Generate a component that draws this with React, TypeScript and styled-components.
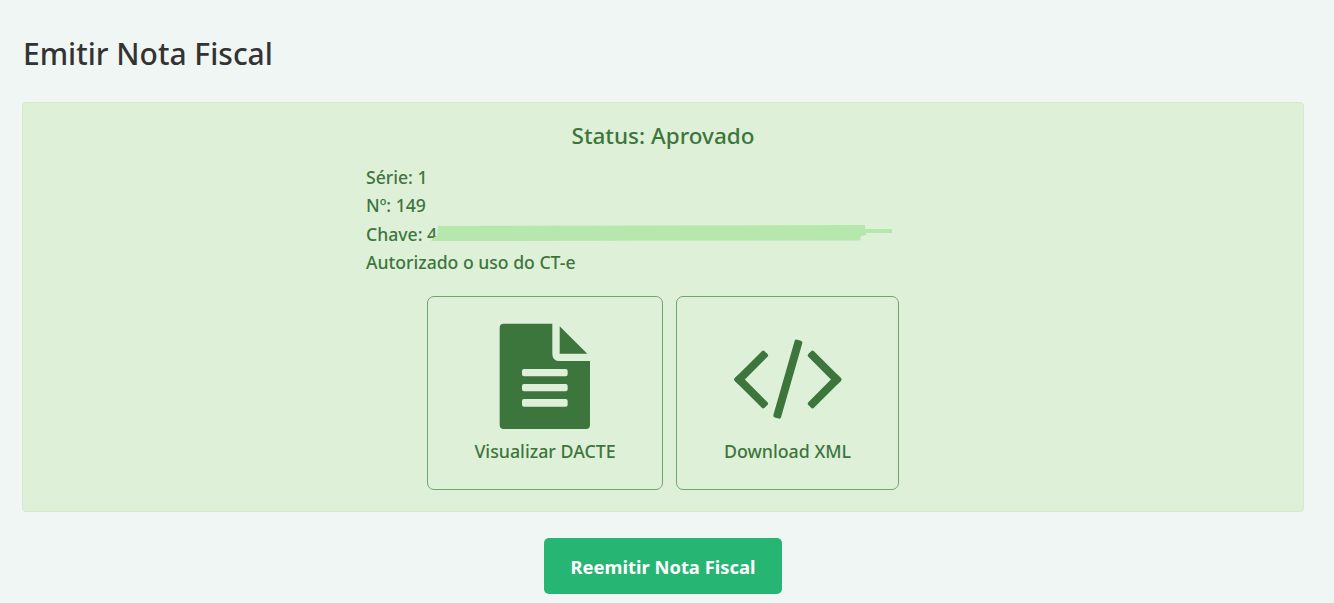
import React from "react";
import styled, { createGlobalStyle } from "styled-components";

const Global = createGlobalStyle`
  html, body { margin: 0; padding: 0; background: #f0f6f4; }
  body { font-family: "Noto Sans", "Open Sans", sans-serif; overflow: hidden; }
`;

const Page = styled.main`
  box-sizing: border-box;
  height: 603px;
  padding: 33px 30px 0 22px;
  overflow: hidden;
`;

const Title = styled.h1`
  margin: 0 0 27px 1px;
  font-size: 30px;
  line-height: 42px;
  font-weight: 500;
  color: #333;
`;

const Panel = styled.section`
  box-sizing: border-box;
  height: 410px;
  padding: 18px 0 0;
  background: #dff0d8;
  border: 1px solid #d6e9c6;
  border-radius: 4px;
  color: #3c763d;
`;

const Status = styled.h2`
  margin: 0 0 12px;
  font-size: 22.5px;
  line-height: 30px;
  font-weight: 500;
  text-align: center;
`;

const Info = styled.div`
  width: 594px;
  margin: 0 auto 19.8px;
`;

const InfoLine = styled.p`
  position: relative;
  margin: 0;
  font-size: 17.6px;
  line-height: 28.3px;
  font-weight: 500;
`;

const Redaction = styled.svg`
  position: absolute;
  left: 57px;
  top: 2px;
  width: 470px;
  height: 20px;
`;

const Actions = styled.div`
  display: flex;
  justify-content: center;
  gap: 13px;
`;

const ActionCard = styled.button<{ $width: number }>`
  box-sizing: border-box;
  width: ${(p) => p.$width}px;
  height: 194px;
  display: flex;
  flex-direction: column;
  align-items: center;
  padding: 0;
  background: transparent;
  border: 1px solid #72a472;
  border-radius: 7px;
  color: #3c763d;
  font: 500 17.8px/24px "Noto Sans", "Open Sans", sans-serif;
`;

const IconSlot = styled.span`
  height: 107px;
  margin: 26px 0 9px;
  display: flex;
  align-items: center;
  justify-content: center;
`;

const Footer = styled.div`
  display: flex;
  justify-content: center;
  margin-top: 26px;
`;

const Primary = styled.button`
  box-sizing: border-box;
  width: 238px;
  height: 56px;
  padding: 1px 0 0;
  background: #26b573;
  border: 0;
  border-radius: 5px;
  color: #fff;
  font: 700 18.4px/24px "Noto Sans", "Open Sans", sans-serif;
`;

const FileIcon = () => (
  <svg width="91.67" height="106.67" viewBox="238 98 275 320" fill="#3c763d" aria-hidden="true">
    <path
      fillRule="evenodd"
      d="M252 100H398V190Q398 212 420 212H511V404Q511 416 499 416H252Q240 416 240 404V112Q240 100 252 100ZM313 236Q307 236 307 242V252Q307 258 313 258H438Q444 258 444 252V242Q444 236 438 236ZM313 281Q307 281 307 287V297Q307 303 313 303H438Q444 303 444 297V287Q444 281 438 281ZM313 326Q307 326 307 332V343Q307 349 313 349H438Q444 349 444 343V332Q444 326 438 326Z"
    />
    <path d="M420 108L503 190H420Z" />
  </svg>
);

const CodeSvg = styled.svg`
  margin-top: 7px;
`;

const CodeIcon = () => (
  <CodeSvg width="110" height="82" viewBox="0 0 110 82" fill="#3c763d" aria-hidden="true">
    <rect x="-4" y="-4" width="42" height="8" rx="2" transform="translate(6.2 40.5) rotate(-45)" />
    <rect x="-4" y="-4" width="42" height="8" rx="2" transform="translate(6.2 40.5) rotate(45)" />
    <rect x="-4" y="-4" width="42" height="8" rx="2" transform="translate(103.6 40.5) rotate(-135)" />
    <rect x="-4" y="-4" width="42" height="8" rx="2" transform="translate(103.6 40.5) rotate(135)" />
    <rect x="0" y="-4" width="81" height="8" rx="2" transform="translate(66 1.2) rotate(106)" />
  </CodeSvg>
);

export default function App() {
  return (
    <Page>
      <Global />
      <Title>Emitir Nota Fiscal</Title>
      <Panel>
        <Status>Status: Aprovado</Status>
        <Info>
          <InfoLine>Série: 1</InfoLine>
          <InfoLine>Nº: 149</InfoLine>
          <InfoLine>
            Chave: 4
            <Redaction viewBox="0 0 470 20" aria-hidden="true">
              <path d="M15 4L442 3L442 7L469 7L469 11L443 11L443 13L438 14L437 18.5L8 19L11 15L14 14Z" fill="#b6e8ae" />
            </Redaction>
          </InfoLine>
          <InfoLine>Autorizado o uso do CT-e</InfoLine>
        </Info>
        <Actions>
          <ActionCard $width={236}>
            <IconSlot>
              <FileIcon />
            </IconSlot>
            Visualizar DACTE
          </ActionCard>
          <ActionCard $width={223}>
            <IconSlot>
              <CodeIcon />
            </IconSlot>
            Download XML
          </ActionCard>
        </Actions>
      </Panel>
      <Footer>
        <Primary>Reemitir Nota Fiscal</Primary>
      </Footer>
    </Page>
  );
}
